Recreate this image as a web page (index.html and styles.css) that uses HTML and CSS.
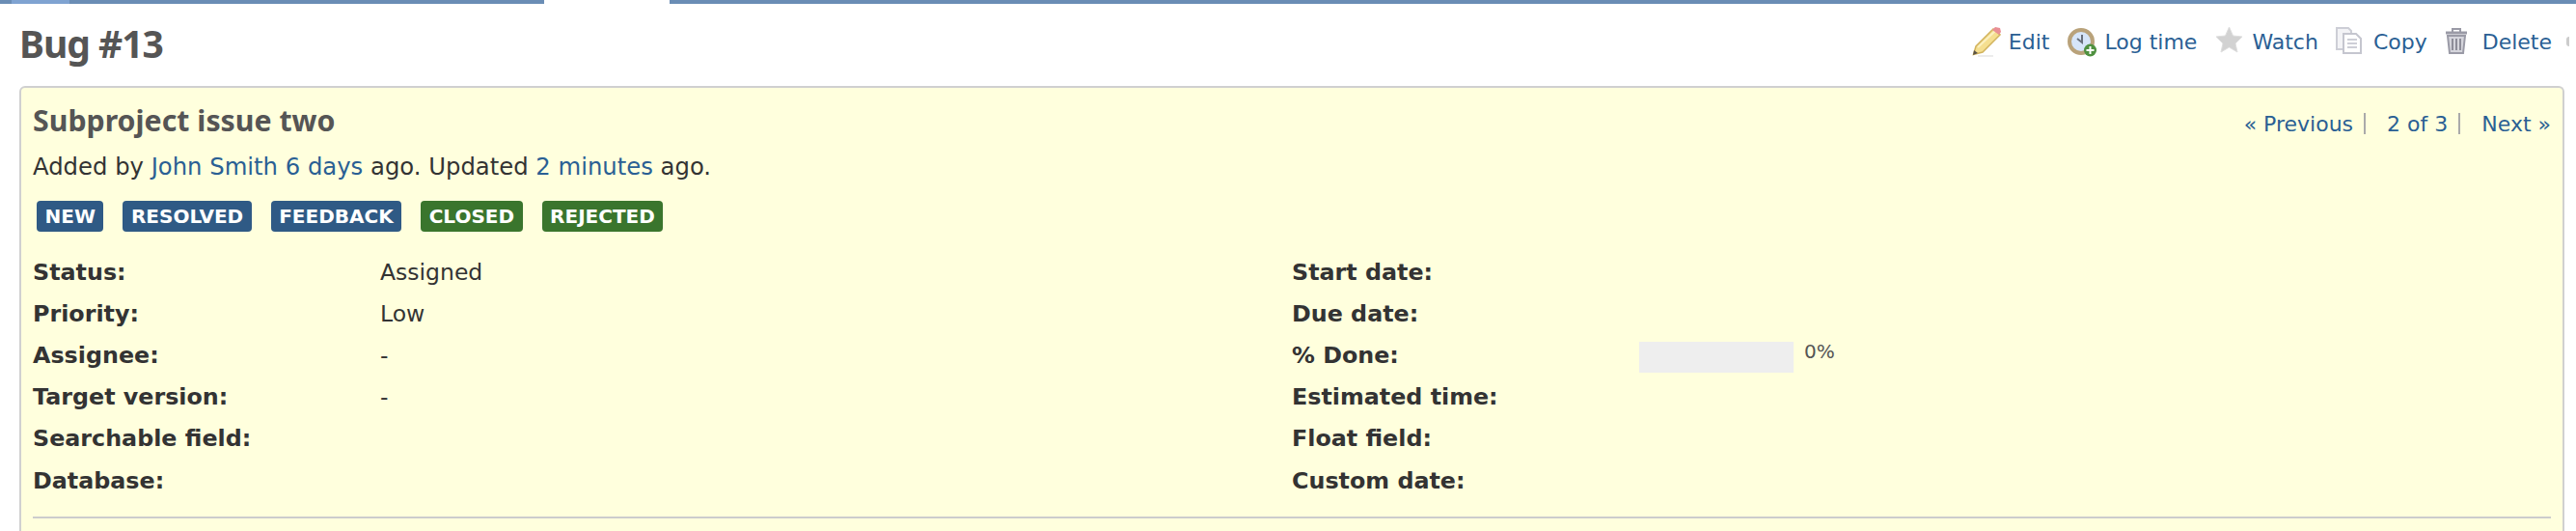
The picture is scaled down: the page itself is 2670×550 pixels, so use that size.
FILE: index.html
```html
<!DOCTYPE html>
<html lang="en">
<head>
    <meta charset="UTF-8">
    <title>Bug #13</title>
    <link rel="stylesheet" href="styles.css">
</head>
<body>
    <div class="tabs">
        <div class="tab tab-edge"></div>
        <div class="tab tab-light"></div>
        <div class="tab tab-first"></div>
        <div class="tab-active"></div>
        <div class="tab tab-rest"></div>
    </div>

    <div class="content">
        <div class="title-bar">
            <h2>Bug #13</h2>
            <div class="actions">
                <a href="#" class="action">
                    <svg class="icon" viewBox="0 0 32 32"><path d="M8 31h16" stroke="#ececec" stroke-width="2"/><path d="M3.5 29.5 6 21 24 3l7 6-18 18z" fill="#f5df90" stroke="#d2b35e" stroke-width="1.5"/><path d="M8 22 26 5" stroke="#fbf0c0" stroke-width="2"/><path d="M23 4l3-3 5 1 1 4-2 3z" fill="#e98f95"/><path d="M3 30l1-5 4 3z" fill="#5a5346"/></svg>
                    Edit
                </a>
                <a href="#" class="action">
                    <svg class="icon" viewBox="0 0 32 32"><circle cx="16" cy="16" r="12" fill="#d6e5f8" stroke="#b9a27a" stroke-width="4"/><path d="M17 9v8l-5-4" fill="none" stroke="#68707c" stroke-width="2"/><circle cx="25.5" cy="25" r="6.5" fill="#4f9140"/><path d="M25.5 21v8M21.5 25h8" stroke="#fff" stroke-width="2"/></svg>
                    Log time
                </a>
                <a href="#" class="action">
                    <svg class="icon" viewBox="0 0 32 32"><path d="M16.5 1l4 9 9.500 1-7 7 2 9-8.500-5-8.500 5 2-9-7-7 9.500-1z" fill="#d2d2d2" stroke="#dedede"/></svg>
                    Watch
                </a>
                <a href="#" class="action">
                    <svg class="icon" viewBox="0 0 32 32"><path d="M2 2h12l3 3v19H2z" fill="#f3f3f6" stroke="#cdced6" stroke-width="2"/><path d="M9 8h13l5 5v15H9z" fill="#fff" stroke="#c5c6cf" stroke-width="2"/><path d="M13 14h10M13 18h10M13 22h10" stroke="#cdced6" stroke-width="2"/></svg>
                    Copy
                </a>
                <a href="#" class="action">
                    <svg class="icon" viewBox="0 0 32 32"><path d="M2 7h22" stroke="#9a9aa6" stroke-width="3"/><path d="M9 6V3h8v3" fill="none" stroke="#9a9aa6" stroke-width="2"/><path d="M4 10h18l-2 18H6z" fill="#d5d5dc" stroke="#9a9aa6" stroke-width="2"/><path d="M9 13v12M13 13v12M17 13v12" stroke="#8d8d99" stroke-width="2"/></svg>
                    Delete
                </a>
                <span class="action-cut"></span>
            </div>
        </div>

        <div class="issue">
            <div class="issue-head">
                <div>
                    <h3>Subproject issue two</h3>
                    <p class="author">Added by <a href="#">John Smith</a> <a href="#">6 days</a> ago. Updated <a href="#">2 minutes</a> ago.</p>
                </div>
                <div class="prev-next">
                    <a href="#">« Previous</a><span class="sep"></span>
                    <a href="#">2 of 3</a><span class="sep"></span>
                    <a href="#">Next »</a>
                </div>
            </div>

            <div class="badges">
                <span class="badge">NEW</span>
                <span class="badge">RESOLVED</span>
                <span class="badge">FEEDBACK</span>
                <span class="badge badge-green">CLOSED</span>
                <span class="badge badge-green">REJECTED</span>
            </div>

            <div class="attributes">
                <div class="attr"><span class="label">Status:</span><span>Assigned</span></div>
                <div class="attr"><span class="label">Start date:</span><span></span></div>
                <div class="attr"><span class="label">Priority:</span><span>Low</span></div>
                <div class="attr"><span class="label">Due date:</span><span></span></div>
                <div class="attr"><span class="label">Assignee:</span><span>-</span></div>
                <div class="attr">
                    <span class="label">% Done:</span>
                    <span class="progress"><span class="progress-bar"></span><span class="percent">0%</span></span>
                </div>
                <div class="attr"><span class="label">Target version:</span><span>-</span></div>
                <div class="attr"><span class="label">Estimated time:</span><span></span></div>
                <div class="attr"><span class="label">Searchable field:</span><span></span></div>
                <div class="attr"><span class="label">Float field:</span><span></span></div>
                <div class="attr"><span class="label">Database:</span><span></span></div>
                <div class="attr"><span class="label">Custom date:</span><span></span></div>
            </div>

            <hr>
        </div>
    </div>
</body>
</html>
```
FILE: styles.css
```css
html, body {
    height: 100%;
    overflow: hidden;
}
body {
    margin: 0;
    background-color: #fff;
    color: #333;
    font-family: "DejaVu Sans", Verdana, sans-serif;
    font-size: 22px;
    display: flex;
    flex-direction: column;
}
a {
    color: #2a5f94;
    text-decoration: none;
}

.tabs {
    display: flex;
    height: 4px;
    flex-shrink: 0;
}
.tab {
    background-color: #6a8db5;
}
.tab-edge {
    width: 12px;
}
.tab-light {
    width: 60px;
    background-color: #7fa3d1;
}
.tab-first {
    width: 492px;
}
.tab-active {
    width: 130px;
    background-color: #fff;
}
.tab-rest {
    flex: 1;
}

.content {
    flex: 1;
    display: flex;
    flex-direction: column;
    padding: 0 12px 0 20px;
}

.title-bar {
    display: flex;
    justify-content: space-between;
    align-items: center;
    height: 85px;
    flex-shrink: 0;
}
h2 {
    margin: 0 0 4px;
    color: #555;
    font-family: "Noto Sans", sans-serif;
    font-size: 39px;
    font-weight: bold;
    letter-spacing: -1px;
}
.actions {
    display: flex;
    align-items: center;
    gap: 17px;
    margin: 0 -5px 7px 0;
}
.action {
    display: flex;
    align-items: center;
    gap: 8px;
}
.icon {
    width: 32px;
    height: 32px;
    flex-shrink: 0;
    filter: blur(0.6px);
}
.action-cut {
    width: 3px;
    height: 10px;
    margin-left: -2px;
    background-color: #ccc;
    border-radius: 3px 0 0 3px;
}

.issue {
    flex: 1;
    background-color: #ffd;
    border: 2px solid #d0d0d0;
    border-bottom: none;
    border-radius: 6px 6px 0 0;
    padding: 0 12px;
}
.issue-head {
    display: flex;
    justify-content: space-between;
}
h3 {
    margin: 16px 0 0;
    color: #555;
    font-family: "Noto Sans", sans-serif;
    font-size: 30.3px;
    font-weight: bold;
    line-height: 36px;
}
.author {
    margin: 16px 0 0;
    font-size: 24.3px;
    line-height: 28px;
}
.prev-next {
    display: flex;
    align-items: center;
    height: 28px;
    margin-top: 23px;
}
.sep {
    width: 2px;
    height: 22px;
    margin: 0 22px 0 11px;
    background-color: #aaa;
}

.badges {
    display: flex;
    gap: 20px;
    margin: 21px 0 0 4px;
}
.badge {
    background-color: #2f5a85;
    color: #fff;
    font-size: 20px;
    font-weight: bold;
    line-height: 32px;
    padding: 0 8.5px;
    border-radius: 4px;
}
.badge-green {
    background-color: #3a752d;
}

.attributes {
    display: grid;
    grid-template-columns: 1fr 1fr;
    grid-auto-rows: 43.2px;
    margin-top: 20px;
    font-size: 23.5px;
}
.attr {
    display: grid;
    grid-template-columns: 360px 1fr;
    align-items: center;
}
.label {
    font-size: 23.8px;
    font-weight: bold;
}
.progress {
    display: flex;
    align-items: center;
    gap: 11px;
}
.progress-bar {
    width: 160px;
    height: 32px;
    margin-top: 4px;
    background-color: #eee;
}
.percent {
    color: #555;
    font-size: 20px;
    margin-top: -7px;
}
hr {
    height: 2px;
    border: none;
    background-color: #ccc;
    margin: 16px 0 0;
}
```
